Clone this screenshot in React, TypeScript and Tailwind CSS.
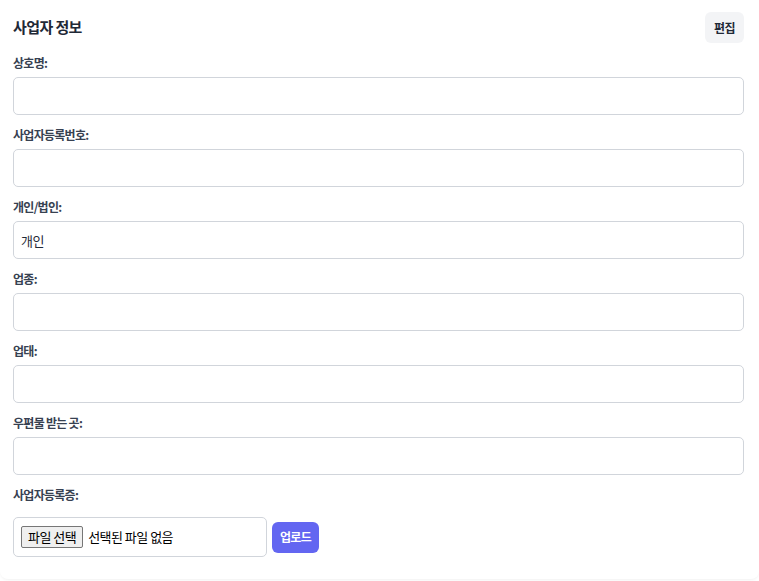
import React from "react";

const fields = [
  { label: "상호명:", value: "" },
  { label: "사업자등록번호:", value: "" },
  { label: "개인/법인:", value: "개인" },
  { label: "업종:", value: "" },
  { label: "업태:", value: "" },
  { label: "우편물 받는 곳:", value: "" },
];

export default function App() {
  return (
    <div
      className="w-[759px] h-[581px] bg-white"
      style={{ fontFamily: '"Noto Sans CJK KR", "Noto Sans", sans-serif' }}
    >
      <div className="rounded-lg bg-white shadow-[0_2px_3px_-1px_rgba(0,0,0,0.06)] pl-[13px] pr-[15px] pt-[12px] pb-[22px]">
        <div className="flex items-center justify-between">
          <h2 className="text-[15px] font-bold text-[#1f2937] tracking-[-0.04em]">사업자 정보</h2>
          <button className="h-[31px] px-[9px] rounded-md bg-[#f3f4f6] text-[12px] font-bold text-[#1f2937] tracking-[-0.04em]">
            편집
          </button>
        </div>
        <div className="mt-[12px] flex flex-col gap-[12px]">
          {fields.map((f) => (
            <div key={f.label} className="flex flex-col">
              <label className="h-[16px] leading-[16px] text-[12px] font-semibold text-[#374151] tracking-[-0.06em]">
                {f.label}
              </label>
              <input
                readOnly
                value={f.value}
                className="mt-[6px] h-[38px] w-full rounded-[5px] border border-[#d1d5db] px-[7px] text-[13px] text-[#1f2937] outline-none tracking-[-0.04em]"
              />
            </div>
          ))}
          <div className="flex flex-col">
            <label className="h-[16px] leading-[16px] text-[12px] font-semibold text-[#374151] tracking-[-0.06em]">
              사업자등록증:
            </label>
            <div className="mt-[14px] flex items-center gap-[5px]">
              <div className="flex h-[40px] w-[254px] items-center rounded-[5px] border border-[#d1d5db] px-[7px]">
                <span className="flex h-[22px] items-center rounded-[2px] border border-[#767676] bg-[#efefef] px-[6px] text-[13px] text-black tracking-[-0.04em]">
                  파일 선택
                </span>
                <span className="ml-[5px] text-[13px] text-black tracking-[-0.04em]">선택된 파일 없음</span>
              </div>
              <button className="h-[31px] px-[8px] rounded-md bg-[#6366f1] text-[12px] font-bold text-white tracking-[-0.06em]">
                업로드
              </button>
            </div>
          </div>
        </div>
      </div>
    </div>
  );
}
